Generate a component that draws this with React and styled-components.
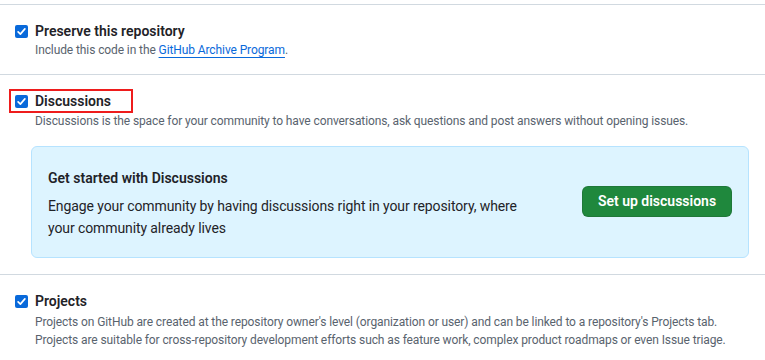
import React from 'react'
import styled, { createGlobalStyle } from 'styled-components'

const GlobalStyle = createGlobalStyle`
  body {
    margin: 0;
    background: #ffffff;
    font-family: Roboto, 'Liberation Sans', sans-serif;
    color: #1f2328;
  }
`

const Page = styled.div`
  padding-top: 4px;
`

const Section = styled.section`
  border-top: 1px solid #d1d9e0;
  padding: 16px 30px ${props => props.bottom || 15}px 15px;
`

const TitleRow = styled.label`
  position: relative;
  display: flex;
  align-items: center;
  gap: 7px;
  height: 20px;
  width: max-content;

  ${props => props.highlighted && `
    &::after {
      content: '';
      position: absolute;
      left: -6px;
      right: -22px;
      top: -2px;
      bottom: -2px;
      border: 2px solid #ee1c1c;
    }
  `}
`

const Box = styled.span`
  display: inline-flex;
  align-items: center;
  justify-content: center;
  width: 13px;
  height: 13px;
  border-radius: 2px;
  background: #0969da;
  flex-shrink: 0;
`

const Title = styled.span`
  font-size: 14px;
  font-weight: 600;
  line-height: 20px;
`

const Description = styled.p`
  margin: ${props => props.gap || 0}px 0 0 20px;
  font-size: 12px;
  line-height: 18px;
  letter-spacing: -0.1px;
  color: #59636e;
`

const Link = styled.a`
  color: #0969da;
  text-decoration: underline;
  text-underline-offset: 3px;
`

const Callout = styled.div`
  margin: 16px -14px 0 16px;
  display: flex;
  align-items: center;
  justify-content: space-between;
  padding: 20px 16px 18px 16px;
  background: #ddf4ff;
  border: 1px solid #b6e3ff;
  border-radius: 6px;
`

const CalloutText = styled.div`
  width: 480px;
`

const CalloutTitle = styled.h3`
  margin: 0 0 6px 0;
  font-size: 14px;
  font-weight: 600;
  line-height: 22px;
`

const CalloutBody = styled.p`
  margin: 0;
  font-size: 14px;
  line-height: 22px;
  letter-spacing: -0.1px;
`

const Button = styled.button`
  width: 150px;
  height: 31px;
  margin-bottom: 4px;
  padding: 0;
  border: 1px solid rgba(31, 35, 40, 0.15);
  border-radius: 6px;
  background: #1f883d;
  color: #ffffff;
  font-family: inherit;
  font-size: 14px;
  font-weight: 600;
  cursor: pointer;
`

const Check = () => (
  <Box>
    <svg width='9' height='9' viewBox='0 0 12 12'>
      <path d='M1.5 6.5 L4.5 9.5 L10.5 2.5' fill='none' stroke='#ffffff' strokeWidth='2.2' strokeLinecap='round' strokeLinejoin='round' />
    </svg>
  </Box>
)

const Option = ({ title, highlighted, gap, children }) => (
  <>
    <TitleRow highlighted={highlighted}>
      <Check />
      <Title>{title}</Title>
    </TitleRow>
    <Description gap={gap}>{children}</Description>
  </>
)

export default function App () {
  return (
    <Page>
      <GlobalStyle />
      <Section>
        <Option title='Preserve this repository'>
          Include this code in the <Link href='#'>GitHub Archive Program</Link>.
        </Option>
      </Section>
      <Section bottom={16}>
        <Option title='Discussions' highlighted gap={1}>
          Discussions is the space for your community to have conversations, ask questions and post answers without opening issues.
        </Option>
        <Callout>
          <CalloutText>
            <CalloutTitle>Get started with Discussions</CalloutTitle>
            <CalloutBody>
              Engage your community by having discussions right in your repository, where your community already lives
            </CalloutBody>
          </CalloutText>
          <Button>Set up discussions</Button>
        </Callout>
      </Section>
      <Section>
        <Option title='Projects' gap={2}>
          Projects on GitHub are created at the repository owner's level (organization or user) and can be linked to a repository's Projects tab. Projects are suitable for cross-repository development efforts such as feature work, complex product roadmaps or even Issue triage.
        </Option>
      </Section>
    </Page>
  )
}
